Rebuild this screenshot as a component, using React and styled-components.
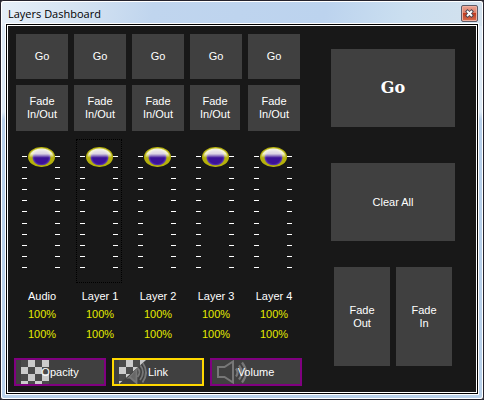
import React, { useState } from "react";
import styled, { createGlobalStyle } from "styled-components";

const GlobalStyle = createGlobalStyle`
  * { box-sizing: border-box; }
  body {
    margin: 0;
    background: #24222c;
    font: 11px/13px "Liberation Sans", Arial, sans-serif;
    color: #fff;
  }
  button { font: inherit; color: inherit; }
`;

const Window = styled.div`
  display: flex;
  flex-direction: column;
  min-height: 100vh;
  border: 1px solid #24222c;
  border-radius: 3px;
  background: #fff;
  padding: 1px;
`;

const Frame = styled.div`
  flex: 1;
  display: flex;
  flex-direction: column;
  padding: 0 3px 3px;
  border-radius: 2px;
  background:
    linear-gradient(100deg, #e6eff8 0, #d6e4f2 70px, #c0d5ee 150px, #bcd3ee 320px, #cbdff0 400px, #d3e1ed 100%) top / 100% 24px no-repeat,
    linear-gradient(180deg, #dce9f5 0, #dce9f5 110px, #b6cfea 118px, #b9d1ea 100%);
`;

const TitleBar = styled.header`
  display: flex;
  align-items: center;
  justify-content: space-between;
  height: 21px;
  padding: 2px 1px 0 3px;
  color: #000;
`;

const Title = styled.h1`
  margin: 0;
  font: 400 11px/16px "Open Sans", sans-serif;
`;

const CloseButton = styled.button`
  display: grid;
  place-items: center;
  width: 17px;
  height: 17px;
  padding: 0;
  border: 1px solid #5d5b68;
  border-radius: 2px;
  box-shadow: inset 0 0 0 1px #eeb0a0;
  background: linear-gradient(#eaa293 0, #dc8069 45%, #bd3b20 50%, #d76f50 100%);
`;

const Client = styled.main`
  flex: 1;
  display: grid;
  grid-template-columns: minmax(0, 288fr) minmax(0, 124fr);
  column-gap: 29px;
  padding: 11px 24px 9px 9px;
  background: #181818;
  box-shadow: inset 0 0 0 1px #fff, inset 0 0 0 2px #000, inset 0 0 0 3px #fff;
`;

const Mixer = styled.section`
  display: flex;
  flex-direction: column;
  justify-content: space-between;
`;

const Channels = styled.div`
  display: grid;
  grid-template-columns: repeat(5, minmax(0, 1fr));
  column-gap: 6px;
  padding: 0 2px;
`;

const Channel = styled.div`
  display: flex;
  flex-direction: column;
  align-items: center;
`;

const PadButton = styled.button`
  width: 100%;
  height: ${(p) => p.$height}px;
  padding: 0;
  border: 0;
  background: #404040;
  text-align: center;
  white-space: pre-line;
`;

const FadeButton = styled(PadButton)`
  margin: 6px 0 ${(p) => 54 - p.$height}px;
  width: ${(p) => (p.$compact ? "50px" : "100%")};
  align-self: flex-start;
`;

const Fader = styled.div`
  display: grid;
  grid-template-columns: 5px 28px 5px;
  align-self: flex-start;
  margin-left: 2px;
  padding: 7px 3px 5px;
  border: 1px dotted ${(p) => (p.$focused ? "#000" : "transparent")};
`;

const Scale = styled.div`
  display: flex;
  flex-direction: column;
  justify-content: space-between;
  padding: 9px 0;
`;

const Tick = styled.span`
  height: 1px;
  background: #fff;
`;

const Range = styled.input`
  appearance: none;
  writing-mode: vertical-lr;
  direction: rtl;
  width: 28px;
  height: 130px;
  margin: 0;
  background: transparent;
  outline: none;

  &::-webkit-slider-thumb {
    appearance: none;
    width: 27px;
    height: 20px;
    border: 0;
    border-radius: 13px / 10px;
    background:
      radial-gradient(ellipse 14px 10px at 50% 50%, #b5b10c00 80%, #b5b10c 92%),
      linear-gradient(#fffff4c0 0, #fffff4e8 15%, #fffff4d0 34%, #fffff480 42%, #fffff400 54%),
      radial-gradient(ellipse 10px 9px at 50% 52%, #3c1299 68%, #5a38b0 84%, #b5b10c 94%);
  }
`;

const Name = styled.label`
  margin-top: 4px;
  line-height: 18px;
  white-space: nowrap;
`;

const Level = styled.output`
  line-height: ${(p) => p.$line}px;
  color: #e4ea00;
`;

const Modes = styled.div`
  display: grid;
  grid-template-columns: repeat(3, minmax(0, 1fr));
  column-gap: 6px;
`;

const ModeButton = styled.button`
  position: relative;
  height: 28px;
  padding: 0;
  border: 2px solid ${(p) => (p.$active ? "#ffd800" : "#800080")};
  background: #404040;
`;

const ModeIcon = styled.svg`
  position: absolute;
  left: 5px;
  top: 0;
`;

const ModeText = styled.span`
  position: relative;
`;

const Master = styled.section`
  display: flex;
  flex-direction: column;
  padding-top: 15px;
`;

const MasterGo = styled(PadButton)`
  font: 700 16px/22px "DejaVu Serif", serif;
  margin-bottom: 36px;
`;

const FadePair = styled.div`
  display: grid;
  grid-template-columns: 1fr 1fr;
  gap: 6px;
  padding: 26px 3px 0;
`;

const LIGHT_SQUARES = [
  [7, 0], [21, 0],
  [0, 7], [14, 7],
  [7, 14], [21, 14],
  [0, 21], [14, 21],
];

function Checker() {
  return (
    <>
      <rect width="28" height="24" fill="#4b4b4b" />
      {LIGHT_SQUARES.map(([x, y]) => (
        <rect key={`${x}-${y}`} x={x} y={y} width="7" height="7" fill="#cbcbcb" />
      ))}
    </>
  );
}

function Speaker() {
  return (
    <g fill="none" stroke="#777" strokeWidth="2">
      <path d="M1 7h6.500L16 1.500v21L7.500 17H1z" />
      <path d="M19 8.500q3 4 0 8M22 5.500q5.500 7 0 14M25 2.500q8 10 0 20" strokeWidth="2.200" />
    </g>
  );
}

const ICONS = {
  Opacity: <Checker />,
  Link: (
    <>
      <clipPath id="upper"><path d="M0 0h27L0 24z" /></clipPath>
      <clipPath id="lower"><path d="M32 0v24H2L27 0z" /></clipPath>
      <g clipPath="url(#upper)"><Checker /></g>
      <g clipPath="url(#lower)" stroke="#777" strokeWidth="1.800" fill="none">
        <path d="M5 17.500h5L17.500 8v15L11 17.500z" fill="#686868" />
        <path d="M18.500 8q4 4 0 9M21 5q6 7 0 15M23.500 2.500q7 10 0 20" />
      </g>
    </>
  ),
  Volume: <Speaker />,
};

const CHANNELS = ["Audio", "Layer 1", "Layer 2", "Layer 3", "Layer 4"];

function ChannelStrip({ name, focused, compact }) {
  const [value, setValue] = useState(100);
  const id = name.replace(" ", "-").toLowerCase();
  return (
    <Channel>
      <PadButton $height={45}>Go</PadButton>
      <FadeButton $height={compact ? 45 : 46} $compact={compact}>{"Fade\nIn/Out"}</FadeButton>
      <Fader $focused={focused}>
        <Scale>{Array.from({ length: 11 }, (_, i) => <Tick key={i} />)}</Scale>
        <Range id={id} type="range" min="0" max="100" value={value} onChange={(e) => setValue(Number(e.target.value))} />
        <Scale>{Array.from({ length: 11 }, (_, i) => <Tick key={i} />)}</Scale>
      </Fader>
      <Name htmlFor={id}>{name}</Name>
      <Level htmlFor={id} $line={18}>{value}%</Level>
      <Level htmlFor={id} $line={22}>{value}%</Level>
    </Channel>
  );
}

export default function App() {
  const [mode, setMode] = useState("Link");
  return (
    <>
      <GlobalStyle />
      <Window>
        <Frame>
          <TitleBar>
            <Title>Layers Dashboard</Title>
            <CloseButton aria-label="Close">
              <svg width="9" height="9" viewBox="0 0 9 9">
                <path d="M2.500 2.500l4 4M6.500 2.500l-4 4" stroke="#464452" strokeWidth="3.400" strokeLinecap="square" />
                <path d="M2 2l5 5M7 2L2 7" stroke="#fff" strokeWidth="1.900" />
              </svg>
            </CloseButton>
          </TitleBar>
          <Client>
            <Mixer>
              <Channels>
                {CHANNELS.map((name) => (
                  <ChannelStrip key={name} name={name} focused={name === "Layer 1"} compact={name === "Layer 3"} />
                ))}
              </Channels>
              <Modes>
                {Object.entries(ICONS).map(([name, icon]) => (
                  <ModeButton key={name} $active={mode === name} aria-pressed={mode === name} onClick={() => setMode(name)}>
                    <ModeIcon width="32" height="24" viewBox="0 0 32 24" aria-hidden="true">{icon}</ModeIcon>
                    <ModeText>{name}</ModeText>
                  </ModeButton>
                ))}
              </Modes>
            </Mixer>
            <Master>
              <MasterGo $height={78}>Go</MasterGo>
              <PadButton $height={78}>Clear All</PadButton>
              <FadePair>
                <PadButton $height={99}>{"Fade\nOut"}</PadButton>
                <PadButton $height={99}>{"Fade\nIn"}</PadButton>
              </FadePair>
            </Master>
          </Client>
        </Frame>
      </Window>
    </>
  );
}
